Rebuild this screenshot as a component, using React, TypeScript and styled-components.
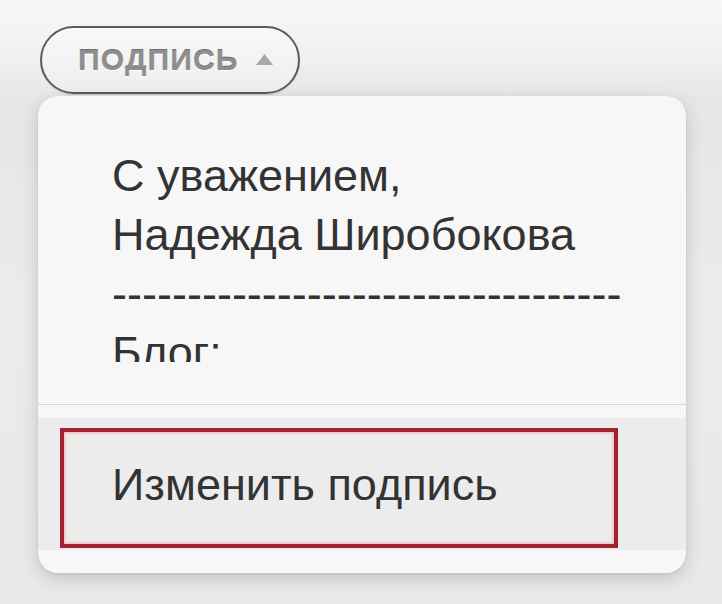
import React from "react";
import styled, { createGlobalStyle } from "styled-components";

const Global = createGlobalStyle`
  html, body { margin: 0; padding: 0; }
  body {
    width: 722px;
    height: 604px;
    overflow: hidden;
    font-family: "Liberation Sans", Arial, sans-serif;
    background: #ececec;
  }
`;

const Page = styled.div`
  width: 722px;
  height: 604px;
  box-sizing: border-box;
  padding: 26px 0 0 38px;
  background: linear-gradient(180deg, #f7f7f7 0px, #f0f0f0 60px, #e6e6e6 100px, #ebebeb 300px, #e9e9e9 604px);
  display: flex;
  flex-direction: column;
`;

const Pill = styled.button`
  margin-left: 2px;
  width: 260px;
  height: 68px;
  box-sizing: border-box;
  border: 2px solid #5c5c5c;
  border-radius: 34px;
  background: linear-gradient(180deg, #f8f8f8, #eeeeee);
  box-shadow: inset 0 1px 0 #ffffff, 0 1px 1px rgba(0, 0, 0, 0.15);
  display: flex;
  align-items: center;
  gap: 17px;
  padding: 0 0 0 36px;
  font-family: "Liberation Sans", Arial, sans-serif;
  font-weight: 700;
  font-size: 30px;
  letter-spacing: 1.2px;
  color: #8e8e8e;
  text-shadow: 0 1px 0 #ffffff, 0 -1px 0 #6f6f6f;
  cursor: pointer;
`;

const Caret = styled.svg`
  width: 17px;
  height: 11px;
  flex: none;
  margin-top: -2px;
`;

const Card = styled.div`
  margin-top: 2px;
  width: 648px;
  height: 477px;
  background: #f7f7f7;
  border-radius: 20px;
  box-shadow: 0 6px 18px rgba(0, 0, 0, 0.16), 0 1px 3px rgba(0, 0, 0, 0.08);
  display: flex;
  flex-direction: column;
  overflow: hidden;
`;

const Preview = styled.div`
  height: 266px;
  overflow: hidden;
  padding: 0 0 0 74px;
  box-sizing: border-box;
  flex: none;
`;

const SigText = styled.div`
  padding-top: 50px;
  font-size: 45px;
  line-height: 59px;
  color: #333333;
  white-space: pre;
`;

const Fade = styled.div`
  height: 42px;
  flex: none;
`;

const Divider = styled.div`
  height: 1px;
  background: #d6d6d6;
  flex: none;
`;

const Item = styled.div`
  position: relative;
  margin-top: 13px;
  height: 132px;
  background: #ececec;
  display: flex;
  align-items: center;
  padding-left: 74px;
  padding-top: 2px;
  box-sizing: border-box;
  font-size: 45px;
  color: #333333;
  flex: none;
`;

const Highlight = styled.div`
  position: absolute;
  left: 22px;
  top: 10px;
  width: 558px;
  height: 120px;
  box-sizing: border-box;
  border: 4px solid #a32231;
  box-shadow: inset 0 0 3px 1px rgba(255, 120, 130, 0.5);
  pointer-events: none;
`;

export default function App() {
  return (
    <>
      <Global />
      <Page>
        <Pill type="button">
          ПОДПИСЬ
          <Caret viewBox="0 0 17 11">
            <polygon points="8.5,0 17,11 0,11" fill="#a8a8a8" />
          </Caret>
        </Pill>
        <Card>
          <Preview>
            <SigText>
              {"С уважением,\nНадежда Широбокова\n" +
                "----------------------------------\nБлог:"}
            </SigText>
          </Preview>
          <Fade />
          <Divider />
          <Item>
            Изменить подпись
            <Highlight />
          </Item>
        </Card>
      </Page>
    </>
  );
}
